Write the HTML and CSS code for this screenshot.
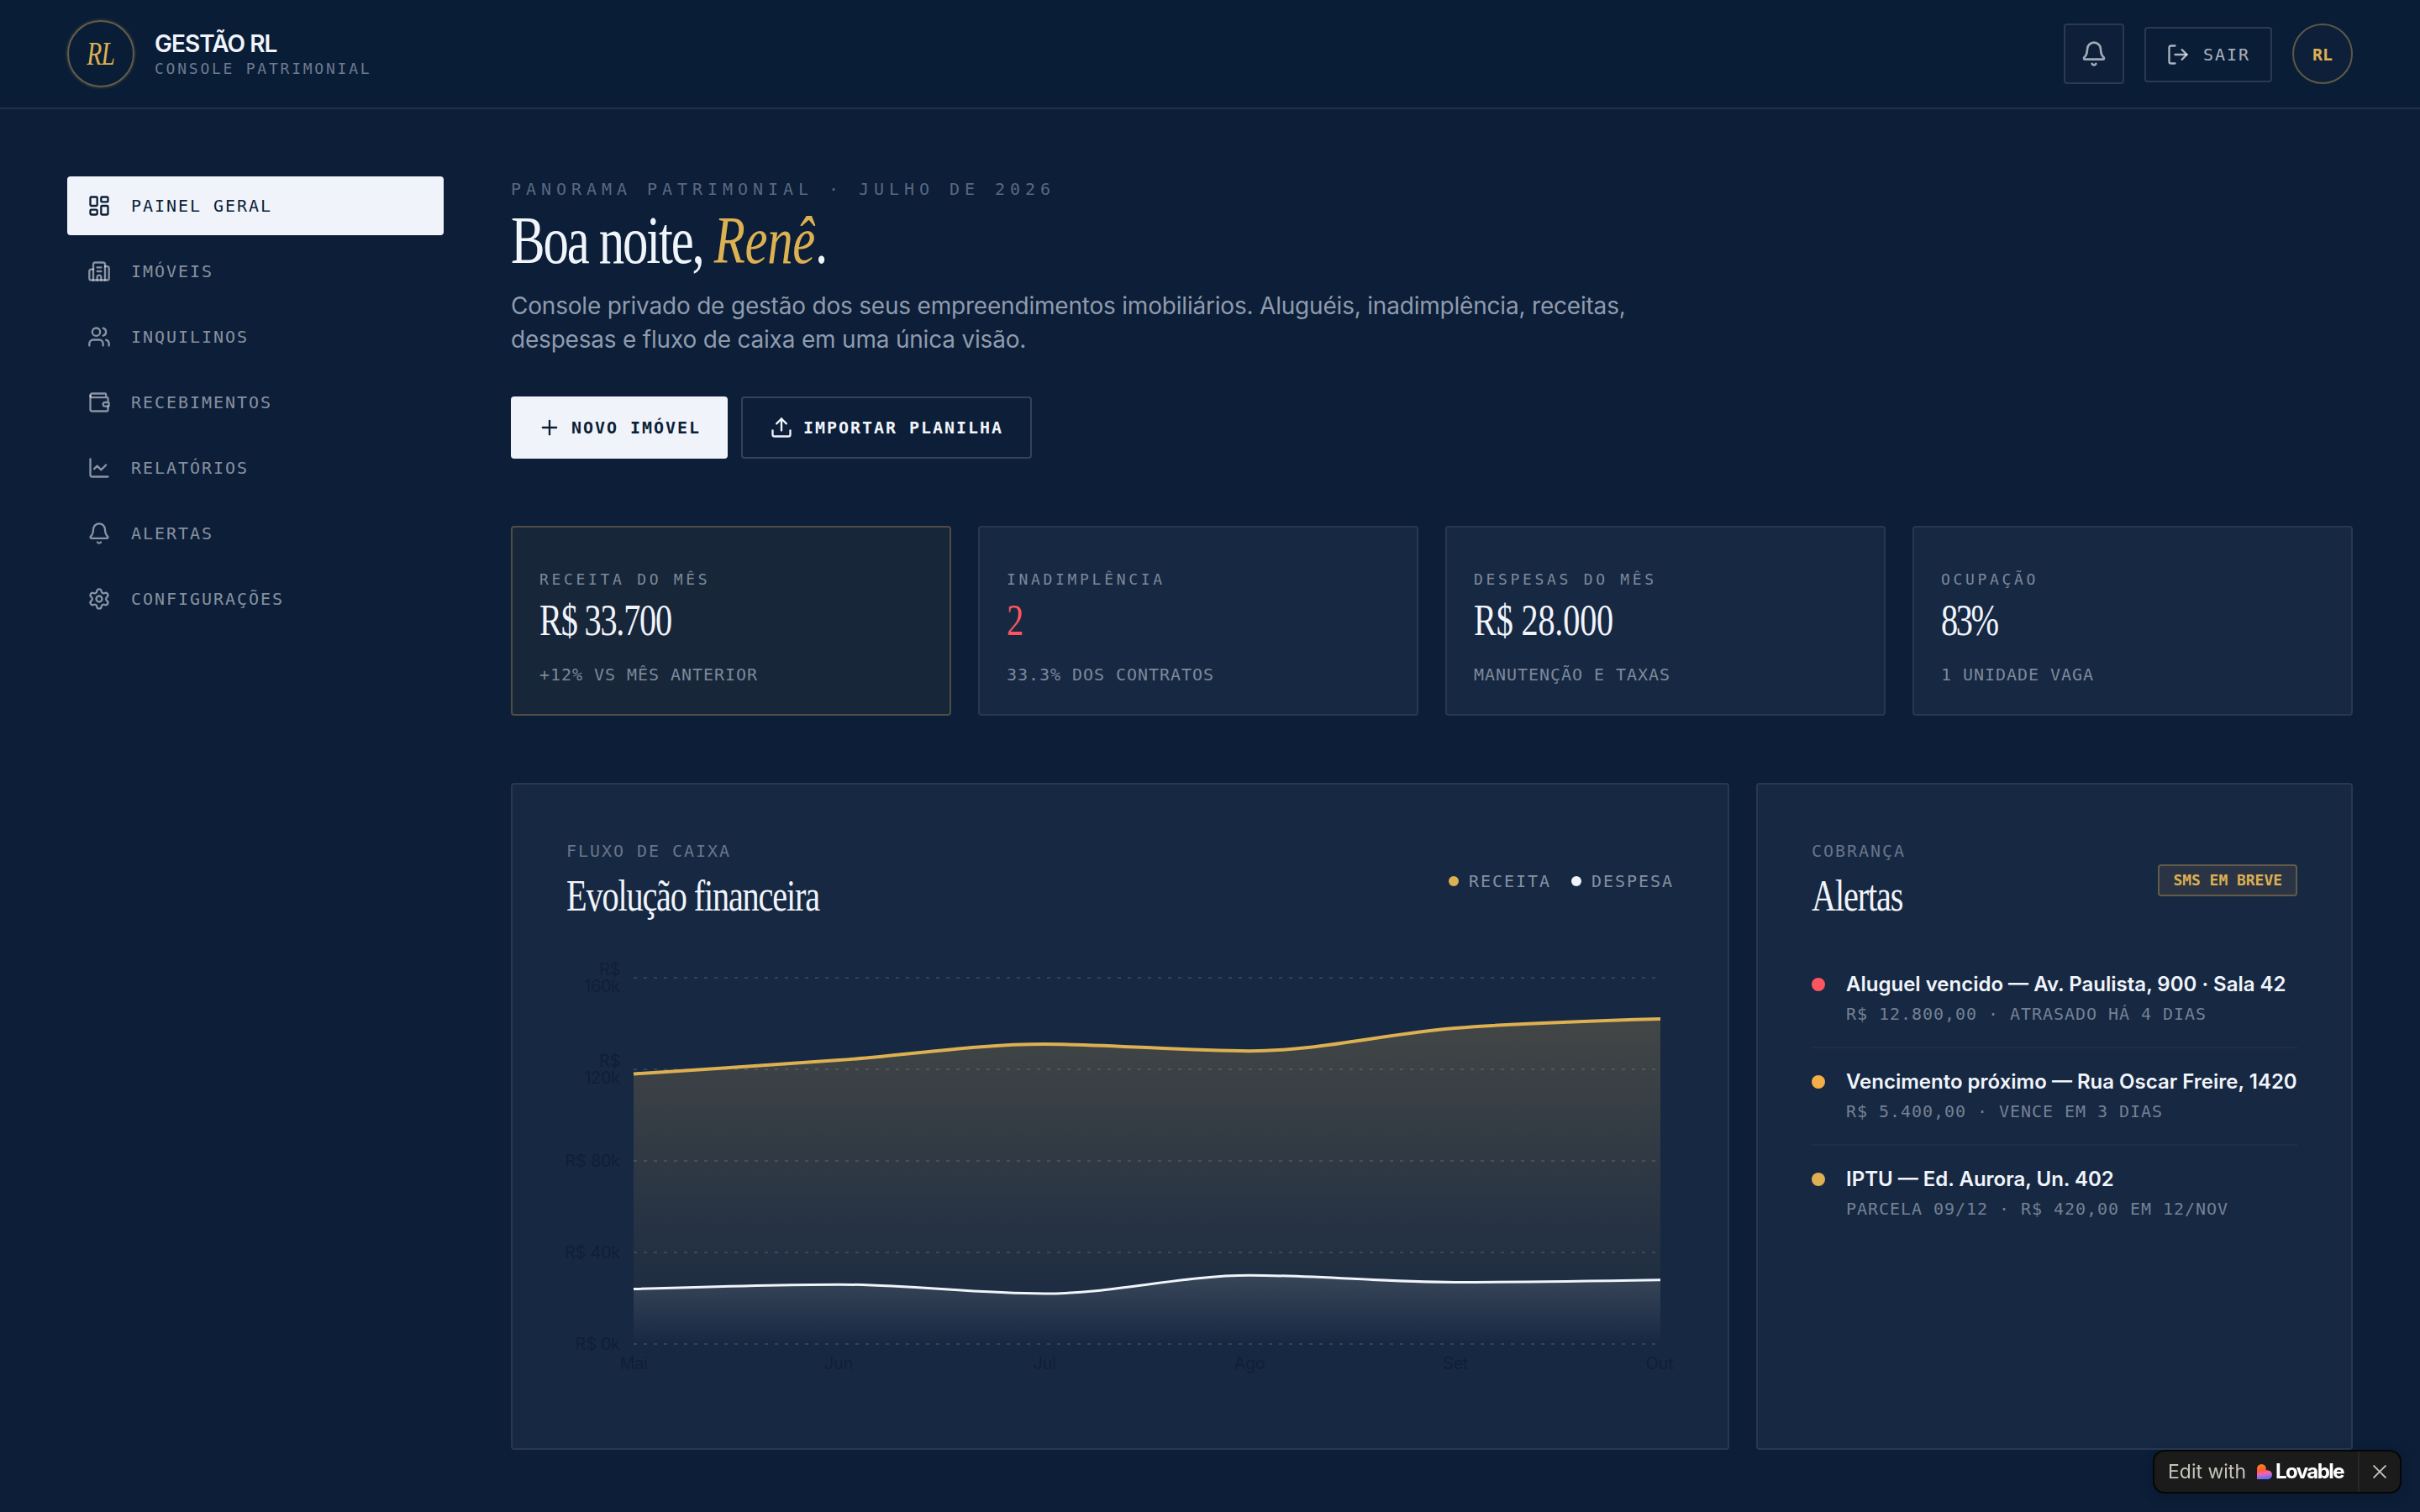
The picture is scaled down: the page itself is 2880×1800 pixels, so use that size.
FILE: index.html
```
<!DOCTYPE html>
<html lang="pt-BR">
<head>
    <meta charset="UTF-8">
    <meta name="viewport" content="width=device-width, initial-scale=1.0">
    <title>Gestão RL</title>
    <link rel="stylesheet" href="styles.css">
</head>
<body>
    <!-- Header -->
    <header class="header">
        <div class="brand">
            <div class="brand-logo"><span>RL</span></div>
            <div>
                <div class="brand-name">GESTÃO RL</div>
                <div class="brand-sub">CONSOLE PATRIMONIAL</div>
            </div>
        </div>
        <div class="header-actions">
            <button class="icon-btn">
                <svg class="icon icon-lg" viewBox="0 0 24 24"><path d="M10.268 21a2 2 0 0 0 3.464 0"/><path d="M3.262 15.326A1 1 0 0 0 4 17h16a1 1 0 0 0 .74-1.673C19.41 13.956 18 12.499 18 8A6 6 0 0 0 6 8c0 4.499-1.411 5.956-2.738 7.326"/></svg>
            </button>
            <button class="logout-btn">
                <svg class="icon" viewBox="0 0 24 24"><path d="m16 17 5-5-5-5"/><path d="M21 12H9"/><path d="M9 21H5a2 2 0 0 1-2-2V5a2 2 0 0 1 2-2h4"/></svg>
                <span>SAIR</span>
            </button>
            <div class="avatar">RL</div>
        </div>
    </header>

    <div class="layout">
        <!-- Sidebar -->
        <nav class="sidebar">
            <a href="#" class="active">
                <svg class="icon" viewBox="0 0 24 24"><rect width="7" height="9" x="3" y="3" rx="1"/><rect width="7" height="5" x="14" y="3" rx="1"/><rect width="7" height="9" x="14" y="12" rx="1"/><rect width="7" height="5" x="3" y="16" rx="1"/></svg>
                <span>PAINEL GERAL</span>
            </a>
            <a href="#">
                <svg class="icon" viewBox="0 0 24 24"><path d="M10 12h4"/><path d="M10 8h4"/><path d="M14 21v-3a2 2 0 0 0-4 0v3"/><path d="M6 10H4a2 2 0 0 0-2 2v7a2 2 0 0 0 2 2h16a2 2 0 0 0 2-2V9a2 2 0 0 0-2-2h-2"/><path d="M6 21V5a2 2 0 0 1 2-2h8a2 2 0 0 1 2 2v16"/></svg>
                <span>IMÓVEIS</span>
            </a>
            <a href="#">
                <svg class="icon" viewBox="0 0 24 24"><path d="M16 21v-2a4 4 0 0 0-4-4H6a4 4 0 0 0-4 4v2"/><path d="M16 3.128a4 4 0 0 1 0 7.744"/><path d="M22 21v-2a4 4 0 0 0-3-3.87"/><circle cx="9" cy="7" r="4"/></svg>
                <span>INQUILINOS</span>
            </a>
            <a href="#">
                <svg class="icon" viewBox="0 0 24 24"><path d="M19 7V4a1 1 0 0 0-1-1H5a2 2 0 0 0 0 4h15a1 1 0 0 1 1 1v4h-3a2 2 0 0 0 0 4h3a1 1 0 0 0 1-1v-2a1 1 0 0 0-1-1"/><path d="M3 5v14a2 2 0 0 0 2 2h15a1 1 0 0 0 1-1v-4"/></svg>
                <span>RECEBIMENTOS</span>
            </a>
            <a href="#">
                <svg class="icon" viewBox="0 0 24 24"><path d="M3 3v16a2 2 0 0 0 2 2h16"/><path d="m19 9-5 5-4-4-3 3"/></svg>
                <span>RELATÓRIOS</span>
            </a>
            <a href="#">
                <svg class="icon" viewBox="0 0 24 24"><path d="M10.268 21a2 2 0 0 0 3.464 0"/><path d="M3.262 15.326A1 1 0 0 0 4 17h16a1 1 0 0 0 .74-1.673C19.41 13.956 18 12.499 18 8A6 6 0 0 0 6 8c0 4.499-1.411 5.956-2.738 7.326"/></svg>
                <span>ALERTAS</span>
            </a>
            <a href="#">
                <svg class="icon" viewBox="0 0 24 24"><path d="M9.671 4.136a2.34 2.34 0 0 1 4.659 0 2.34 2.34 0 0 0 3.319 1.915 2.34 2.34 0 0 1 2.33 4.033 2.34 2.34 0 0 0 0 3.831 2.34 2.34 0 0 1-2.33 4.033 2.34 2.34 0 0 0-3.319 1.915 2.34 2.34 0 0 1-4.659 0 2.34 2.34 0 0 0-3.32-1.915 2.34 2.34 0 0 1-2.33-4.033 2.34 2.34 0 0 0 0-3.831A2.34 2.34 0 0 1 6.35 6.051a2.34 2.34 0 0 0 3.319-1.915"/><circle cx="12" cy="12" r="3"/></svg>
                <span>CONFIGURAÇÕES</span>
            </a>
        </nav>

        <!-- Main Content -->
        <main class="main">
            <p class="eyebrow">PANORAMA PATRIMONIAL · JULHO DE 2026</p>
            <h1 class="serif">Boa noite, <em>Renê</em>.</h1>
            <p class="intro">Console privado de gestão dos seus empreendimentos imobiliários. Aluguéis, inadimplência, receitas,<br>despesas e fluxo de caixa em uma única visão.</p>
            <div class="actions">
                <button class="btn btn-primary">
                    <svg class="icon" viewBox="0 0 24 24"><path d="M5 12h14"/><path d="M12 5v14"/></svg>
                    <span>NOVO IMÓVEL</span>
                </button>
                <button class="btn btn-outline">
                    <svg class="icon" viewBox="0 0 24 24"><path d="M12 3v12"/><path d="m17 8-5-5-5 5"/><path d="M21 15v4a2 2 0 0 1-2 2H5a2 2 0 0 1-2-2v-4"/></svg>
                    <span>IMPORTAR PLANILHA</span>
                </button>
            </div>

            <!-- Stats -->
            <section class="stats">
                <div class="stat stat-gold">
                    <div class="stat-label">RECEITA DO MÊS</div>
                    <div class="stat-value serif">R$ 33.700</div>
                    <div class="stat-note">+12% VS MÊS ANTERIOR</div>
                </div>
                <div class="stat">
                    <div class="stat-label">INADIMPLÊNCIA</div>
                    <div class="stat-value serif danger">2</div>
                    <div class="stat-note">33.3% DOS CONTRATOS</div>
                </div>
                <div class="stat">
                    <div class="stat-label">DESPESAS DO MÊS</div>
                    <div class="stat-value serif wide">R$ 28.000</div>
                    <div class="stat-note">MANUTENÇÃO E TAXAS</div>
                </div>
                <div class="stat">
                    <div class="stat-label">OCUPAÇÃO</div>
                    <div class="stat-value serif narrow">83%</div>
                    <div class="stat-note">1 UNIDADE VAGA</div>
                </div>
            </section>

            <section class="panels">
                <!-- Cash flow chart -->
                <div class="panel">
                    <div class="panel-head">
                        <div>
                            <div class="panel-kicker">FLUXO DE CAIXA</div>
                            <h2 class="serif">Evolução financeira</h2>
                        </div>
                        <div class="legend">
                            <span class="legend-item"><i class="dot-gold"></i>RECEITA</span>
                            <span class="legend-item"><i class="dot-white"></i>DESPESA</span>
                        </div>
                    </div>
                    <svg class="chart" viewBox="0 0 1318 506">
                        <defs>
                            <linearGradient id="fillReceita" x1="0" y1="0" x2="0" y2="1">
                                <stop offset="0" stop-color="#ddb052" stop-opacity="0.22"/>
                                <stop offset="1" stop-color="#ddb052" stop-opacity="0"/>
                            </linearGradient>
                            <linearGradient id="fillDespesa" x1="0" y1="0" x2="0" y2="1">
                                <stop offset="0" stop-color="#f0f4fb" stop-opacity="0.12"/>
                                <stop offset="1" stop-color="#f0f4fb" stop-opacity="0"/>
                            </linearGradient>
                        </defs>
                        <g class="grid">
                            <path d="M80 10H1302"/>
                            <path d="M80 119H1302"/>
                            <path d="M80 228H1302"/>
                            <path d="M80 337H1302"/>
                            <path d="M80 446H1302"/>
                        </g>
                        <path fill="url(#fillReceita)" d="M80 124.45C161.5 119.23 242.9 114 324.4 108.1C405.9 102.2 487.3 89.03 568.8 89.03C650.3 89.03 731.7 97.2 813.2 97.2C894.7 97.2 976.1 76.31 1057.6 69.95C1139.1 63.59 1220.5 61.32 1302 59.05V446H80Z"/>
                        <path class="line-receita" d="M80 124.45C161.5 119.23 242.9 114 324.4 108.1C405.9 102.2 487.3 89.03 568.8 89.03C650.3 89.03 731.7 97.2 813.2 97.2C894.7 97.2 976.1 76.31 1057.6 69.95C1139.1 63.59 1220.5 61.32 1302 59.05"/>
                        <path fill="url(#fillDespesa)" d="M80 380.6C161.5 377.88 242.9 375.15 324.4 375.15C405.9 375.15 487.3 386.05 568.8 386.05C650.3 386.05 731.7 364.25 813.2 364.25C894.7 364.25 976.1 372.43 1057.6 372.43C1139.1 372.43 1220.5 371.06 1302 369.7V446H80Z"/>
                        <path class="line-despesa" d="M80 380.6C161.5 377.88 242.9 375.15 324.4 375.15C405.9 375.15 487.3 386.05 568.8 386.05C650.3 386.05 731.7 364.25 813.2 364.25C894.7 364.25 976.1 372.43 1057.6 372.43C1139.1 372.43 1220.5 371.06 1302 369.7"/>
                        <g class="axis-y">
                            <text x="64" y="7">R$</text>
                            <text x="64" y="27">160k</text>
                            <text x="64" y="116">R$</text>
                            <text x="64" y="136">120k</text>
                            <text x="64" y="235">R$ 80k</text>
                            <text x="64" y="344">R$ 40k</text>
                            <text x="64" y="453">R$ 0k</text>
                        </g>
                        <g class="axis-x">
                            <text x="80" y="476">Mai</text>
                            <text x="324" y="476">Jun</text>
                            <text x="569" y="476">Jul</text>
                            <text x="813" y="476">Ago</text>
                            <text x="1058" y="476">Set</text>
                            <text x="1301" y="476">Out</text>
                        </g>
                    </svg>
                </div>

                <!-- Alerts -->
                <div class="panel">
                    <div class="panel-head">
                        <div>
                            <div class="panel-kicker">COBRANÇA</div>
                            <h2 class="serif">Alertas</h2>
                        </div>
                        <span class="badge">SMS EM BREVE</span>
                    </div>
                    <ul class="alerts">
                        <li>
                            <i class="dot-red"></i>
                            <div>
                                <div class="alert-title">Aluguel vencido — Av. Paulista, 900 · Sala 42</div>
                                <div class="alert-note">R$ 12.800,00 · ATRASADO HÁ 4 DIAS</div>
                            </div>
                        </li>
                        <li>
                            <i class="dot-orange"></i>
                            <div>
                                <div class="alert-title">Vencimento próximo — Rua Oscar Freire, 1420</div>
                                <div class="alert-note">R$ 5.400,00 · VENCE EM 3 DIAS</div>
                            </div>
                        </li>
                        <li>
                            <i class="dot-gold"></i>
                            <div>
                                <div class="alert-title">IPTU — Ed. Aurora, Un. 402</div>
                                <div class="alert-note">PARCELA 09/12 · R$ 420,00 EM 12/NOV</div>
                            </div>
                        </li>
                    </ul>
                </div>
            </section>
        </main>
    </div>

    <!-- Floating edit badge -->
    <div class="lovable">
        <a class="lovable-link" href="#">
            <span class="lovable-edit">Edit with</span>
            <svg class="lovable-heart" viewBox="0 0 18 18">
                <defs>
                    <linearGradient id="heart" x1="0.4" y1="0" x2="0.55" y2="1">
                        <stop offset="0.1" stop-color="#ff7a1a"/>
                        <stop offset="0.4" stop-color="#ff5a3c"/>
                        <stop offset="0.62" stop-color="#f563b8"/>
                        <stop offset="0.95" stop-color="#5a73f5"/>
                    </linearGradient>
                </defs>
                <path fill="url(#heart)" d="M0 5.4a5.4 5.4 0 0 1 10.8 0v1.8h1.8a5.4 5.4 0 0 1 0 10.8H0Z"/>
            </svg>
            <span class="lovable-name">Lovable</span>
        </a>
        <button class="lovable-close">
            <svg viewBox="0 0 14 14"><path d="M1 1l12 12M13 1L1 13"/></svg>
        </button>
    </div>
</body>
</html>
```
FILE: styles.css
```
/* General Reset */
* {
    margin: 0;
    padding: 0;
    box-sizing: border-box;
}

body {
    font-family: Inter, 'Liberation Sans', sans-serif;
    background-color: #0c1e38;
    color: #f0f4fb;
    width: 2880px;
    height: 1800px;
    overflow: hidden;
}

button {
    background: none;
    border: none;
    color: inherit;
    font: inherit;
}

a {
    color: inherit;
    text-decoration: none;
}

.icon {
    width: 28px;
    height: 28px;
    flex: none;
    fill: none;
    stroke: currentColor;
    stroke-width: 2;
    stroke-linecap: round;
    stroke-linejoin: round;
}

.icon-lg {
    width: 32px;
    height: 32px;
}

/* Condensed serif for headings and values */
.serif {
    font-family: 'Liberation Serif', serif;
    font-weight: 400;
    letter-spacing: -0.035em;
    white-space: nowrap;
    transform: scaleX(0.76);
    transform-origin: left center;
}

.brand-sub,
.logout-btn,
.avatar,
.sidebar,
.eyebrow,
.btn,
.stat-label,
.stat-note,
.panel-kicker,
.legend,
.badge,
.alert-note {
    font-family: 'DejaVu Sans Mono', monospace;
    font-size: 20px;
    line-height: 30px;
    white-space: nowrap;
}

/* Header Styling */
.header {
    display: flex;
    justify-content: space-between;
    align-items: center;
    height: 130px;
    padding: 0 80px;
    background-color: #0a1d36;
    border-bottom: 2px solid #22324b;
}

.brand {
    display: flex;
    align-items: center;
    gap: 24px;
}

.brand-logo {
    width: 80px;
    height: 80px;
    display: flex;
    align-items: center;
    justify-content: center;
    border: 2px solid #645d4a;
    border-radius: 50%;
    box-shadow: 0 0 3px 1px rgba(221, 176, 82, 0.2);
}

.brand-logo span {
    font-family: 'Liberation Serif', serif;
    font-style: italic;
    font-size: 41px;
    line-height: 48px;
    letter-spacing: -0.03em;
    padding-bottom: 2px;
    color: #ddb052;
    transform: scaleX(0.72);
}

.brand-name {
    font-size: 28px;
    line-height: 36px;
    font-weight: 600;
    letter-spacing: -0.035em;
}

.brand-sub {
    font-size: 18px;
    line-height: 24px;
    letter-spacing: 2.76px;
    color: #6c7a90;
}

.header-actions {
    display: flex;
    align-items: center;
    gap: 24px;
}

.icon-btn {
    width: 72px;
    height: 72px;
    display: flex;
    align-items: center;
    justify-content: center;
    background-color: #0e1f39;
    border: 2px solid #2b3a53;
    border-radius: 4px;
    color: rgba(240, 244, 251, 0.65);
}

.logout-btn {
    height: 66px;
    display: flex;
    align-items: center;
    gap: 16px;
    margin-top: 2px;
    padding: 0 24px;
    border: 2px solid #2b3a53;
    border-radius: 4px;
    letter-spacing: 1.96px;
    color: rgba(240, 244, 251, 0.7);
}

.avatar {
    width: 72px;
    height: 72px;
    display: flex;
    align-items: center;
    justify-content: center;
    background-color: #0e1f39;
    border: 2px solid #5d5847;
    border-radius: 50%;
    padding-top: 2px;
    font-weight: 700;
    color: #ddb052;
}

.layout {
    display: flex;
    gap: 80px;
    padding: 80px 80px 0;
}

/* Sidebar Styling */
.sidebar {
    width: 448px;
    flex: none;
    display: flex;
    flex-direction: column;
    gap: 8px;
    letter-spacing: 1.96px;
}

.sidebar a {
    height: 70px;
    display: flex;
    align-items: center;
    gap: 24px;
    padding: 0 24px;
    border-radius: 4px;
    color: rgba(240, 244, 251, 0.55);
}

.sidebar a.active {
    background-color: #f0f4fa;
    color: #0c1e38;
}

/* Main Content Styling */
.main {
    flex: 1;
    min-width: 0;
}

.eyebrow {
    letter-spacing: 5.96px;
    color: #596880;
}

h1 {
    font-size: 80px;
    line-height: 80px;
    letter-spacing: -0.04em;
    margin-top: 6px;
}

h1 em {
    color: #ddb052;
    letter-spacing: -0.005em;
}

.intro {
    margin-top: 18px;
    font-size: 28px;
    line-height: 40px;
    letter-spacing: -0.2px;
    color: #8f9bad;
}

.actions {
    display: flex;
    gap: 16px;
    margin-top: 48px;
}

.btn {
    height: 74px;
    display: flex;
    align-items: center;
    gap: 12px;
    padding: 0 32px;
    border-radius: 4px;
    font-weight: 700;
    letter-spacing: 1.96px;
}

.btn-primary {
    background-color: #f0f4fa;
    color: #0c1e38;
}

.btn-outline {
    border: 2px solid #34435a;
}

/* Stats */
.stats {
    display: grid;
    grid-template-columns: repeat(4, 1fr);
    gap: 32px;
    margin-top: 80px;
}

.stat {
    height: 226px;
    padding: 48px 32px 32px;
    background-color: #172842;
    border: 2px solid #283852;
    border-radius: 4px;
}

.stat-gold {
    background-color: #18263a;
    border-color: #504e43;
}

.stat-label {
    font-size: 18px;
    line-height: 28px;
    letter-spacing: 3.68px;
    color: #7c899b;
}

.stat-value {
    font-size: 53px;
    line-height: 60px;
    letter-spacing: -0.03em;
    margin-top: 4px;
}

.stat-value.wide {
    letter-spacing: -0.005em;
}

.stat-value.narrow {
    letter-spacing: -0.06em;
}

.danger {
    color: #fb5560;
}

.stat-note {
    margin-top: 20px;
    letter-spacing: 0.96px;
    color: #7c899b;
}

/* Panels */
.panels {
    display: grid;
    grid-template-columns: 1450px 710px;
    gap: 32px;
    margin-top: 80px;
}

.panel {
    height: 794px;
    padding: 64px;
    background-color: #172842;
    border: 2px solid #283852;
    border-radius: 4px;
}

.panel-head {
    display: flex;
    justify-content: space-between;
    align-items: center;
    height: 103px;
}

.panel-kicker {
    letter-spacing: 1.96px;
    color: #67758a;
}

h2 {
    font-size: 53px;
    line-height: 70px;
    margin-top: 3px;
}

h2.serif {
    letter-spacing: -0.029em;
}

.legend {
    display: flex;
    gap: 24px;
    margin-bottom: 1px;
    letter-spacing: 1.96px;
    color: #8491a3;
}

.legend-item {
    display: flex;
    align-items: center;
    gap: 12px;
}

.legend i {
    width: 12px;
    height: 12px;
    border-radius: 50%;
}

.dot-gold {
    background-color: #ddb052;
}

.dot-white {
    background-color: #f0f4fb;
}

.dot-red {
    background-color: #fb5560;
}

.dot-orange {
    background-color: #f3ae48;
}

.chart {
    display: block;
    width: 1318px;
    height: 506px;
    margin-top: 53px;
    overflow: visible;
}

.grid path {
    stroke: #32425a;
    stroke-width: 2;
    stroke-dasharray: 4 8;
}

.line-receita {
    fill: none;
    stroke: #ddb052;
    stroke-width: 4;
}

.line-despesa {
    fill: none;
    stroke: #f0f4fb;
    stroke-width: 3;
}

.chart text {
    font-size: 20px;
    letter-spacing: -0.3px;
    fill: #0e1f39;
}

.axis-y {
    text-anchor: end;
}

.axis-x {
    text-anchor: middle;
}

.badge {
    padding: 0 16px;
    margin-bottom: 3px;
    font-size: 18px;
    line-height: 34px;
    font-weight: 700;
    letter-spacing: -0.04px;
    color: #ddb052;
    background-color: #2a3444;
    border: 2px solid #625b4a;
    border-radius: 4px;
}

.alerts {
    list-style: none;
    margin-top: 52px;
}

.alerts li {
    display: flex;
    gap: 25px;
    padding-bottom: 25px;
    margin-bottom: 21px;
    border-bottom: 2px solid #1f2f49;
}

.alerts li:last-child {
    border-bottom: none;
}

.alerts i {
    width: 16px;
    height: 16px;
    margin-top: 11px;
    border-radius: 50%;
}

.alert-title {
    padding-top: 1px;
    font-size: 24px;
    line-height: 36px;
    font-weight: 600;
    white-space: nowrap;
}

.alert-note {
    margin-top: 4px;
    padding-bottom: 1px;
    line-height: 26px;
    letter-spacing: 0.96px;
    color: #748194;
}

/* Floating edit badge */
.lovable {
    position: fixed;
    right: 22px;
    bottom: 22px;
    width: 296px;
    height: 52px;
    display: flex;
    background-color: #1b1b1b;
    border: 2px solid #050608;
    border-radius: 14px;
    box-shadow: 0 4px 16px rgba(0, 0, 0, 0.2);
}

.lovable-link {
    width: 244px;
    display: flex;
    align-items: center;
    padding-left: 16px;
    border-right: 2px solid #272727;
}

.lovable-edit {
    width: 106px;
    font-size: 23px;
    line-height: 32px;
    color: #c6c2ba;
}

.lovable-heart {
    width: 18px;
    height: 18px;
}

.lovable-name {
    margin-left: 4px;
    font-size: 24px;
    line-height: 32px;
    font-weight: 700;
    letter-spacing: -0.065em;
    color: #ffffff;
}

.lovable-close {
    flex: 1;
    display: flex;
    align-items: center;
    justify-content: center;
}

.lovable-close svg {
    width: 16px;
    height: 16px;
    fill: none;
    stroke: #c6c2ba;
    stroke-width: 1.7;
    stroke-linecap: round;
}
```
